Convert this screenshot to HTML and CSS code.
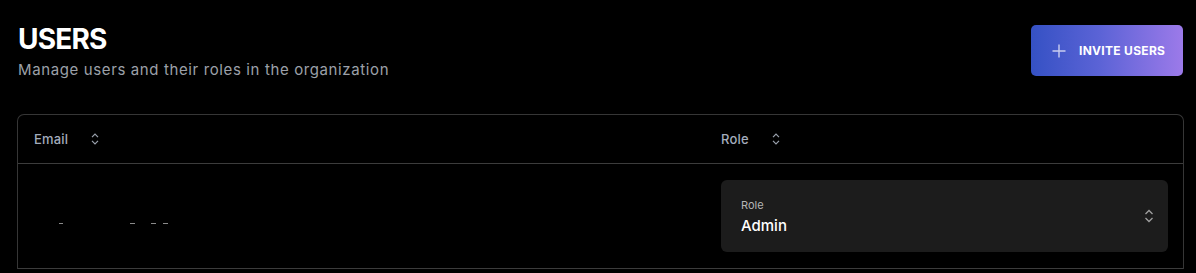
FILE: index.html
```html
<!DOCTYPE html>
<html lang="en">
<head>
<meta charset="utf-8">
<title>Users</title>
<link rel="stylesheet" href="styles.css">
</head>
<body>
<div class="page">
  <header class="top">
    <div class="titles">
      <h1 class="title">USERS</h1>
      <p class="subtitle">Manage users and their roles in the organization</p>
    </div>
    <button class="invite" type="button">
      <svg class="plus" width="14" height="14" viewBox="0 0 14 14" aria-hidden="true">
        <path d="M7 0.5V13.5M0.5 7H13.5" stroke="currentColor" stroke-width="1.4" fill="none"/>
      </svg>
      <span>INVITE USERS</span>
    </button>
  </header>

  <div class="table">
    <div class="row head">
      <div class="cell th">Email
        <svg class="sort" width="8" height="12" viewBox="0 0 8 12" aria-hidden="true"><path d="M1 4.2L4 1.2L7 4.2M1 7.8L4 10.8L7 7.8" stroke="currentColor" stroke-width="1.2" fill="none"/></svg>
      </div>
      <div class="cell th">Role
        <svg class="sort" width="8" height="12" viewBox="0 0 8 12" aria-hidden="true"><path d="M1 4.2L4 1.2L7 4.2M1 7.8L4 10.8L7 7.8" stroke="currentColor" stroke-width="1.2" fill="none"/></svg>
      </div>
    </div>
    <div class="row body">
      <div class="cell email">
        <span class="redact r1"></span><span class="redact r2"></span><span class="redact r3"></span><span class="redact r4"></span>
      </div>
      <div class="cell role">
        <div class="select">
          <div class="select-text">
            <span class="select-label">Role</span>
            <span class="select-value">Admin</span>
          </div>
          <svg class="chev" width="10" height="14" viewBox="0 0 10 14" aria-hidden="true"><path d="M1.5 5L5 1.5L8.5 5M1.5 9L5 12.5L8.5 9" stroke="currentColor" stroke-width="1.3" fill="none"/></svg>
        </div>
      </div>
    </div>
  </div>
</div>
</body>
</html>
```
FILE: styles.css
```css
* { box-sizing: border-box; }
html, body { margin: 0; padding: 0; background: #000; }
body {
  font-family: "Inter", "Liberation Sans", sans-serif;
  color: #fff;
}
.page {
  padding: 25px 12px 0 17px;
}
.top {
  display: flex;
  justify-content: space-between;
  align-items: flex-start;
  padding-right: 1px;
}
.titles { padding-left: 1px; }
.title {
  margin: 0;
  font-size: 28px;
  line-height: 28px;
  font-weight: 700;
  letter-spacing: -0.8px;
}
.subtitle {
  margin: 8px 0 0 0;
  font-size: 15px;
  line-height: 18px;
  color: #9ca0a9;
  letter-spacing: 0.62px;
}
.invite {
  display: flex;
  align-items: center;
  gap: 13px;
  width: 152px;
  height: 51px;
  padding: 0 0 0 21px;
  border: none;
  border-radius: 5px;
  background: linear-gradient(90deg, #3551c4 0%, #5b63d6 45%, #9c7ae9 100%);
  color: #fff;
  font-family: inherit;
  font-size: 12px;
  font-weight: 700;
  letter-spacing: 0.3px;
  cursor: pointer;
}
.plus { color: #c9cdf0; }
.table {
  margin-top: 35px;
  border: 1px solid #363636;
  border-bottom: none;
  border-radius: 7px 7px 0 0;
}
.row {
  display: grid;
  grid-template-columns: 687px 1fr;
}
.head {
  height: 49px;
  border-bottom: 1px solid #3c3c3c;
}
.body {
  height: 105px;
  border-bottom: 1px solid #3c3c3c;
}
.cell {
  padding: 0 16px;
  display: flex;
  align-items: center;
}
.th {
  font-size: 13px;
  font-weight: 500;
  color: #a3acbc;
  letter-spacing: 0.2px;
  gap: 23px;
}
.sort { color: #9aa1ad; }
.email { position: relative; }
.redact {
  display: block;
  position: absolute;
  top: 59px;
  height: 1px;
  background: #8a8a8a;
}
.r1 { left: 41px; width: 4px; }
.r2 { left: 112px; width: 5px; }
.r3 { left: 133px; width: 5px; }
.r4 { left: 145px; width: 5px; }
.role {
  padding: 16px 15px 16px 16px;
  align-items: stretch;
}
.select {
  flex: 1;
  display: flex;
  align-items: center;
  justify-content: space-between;
  background: #1c1c1c;
  border-radius: 6px;
  padding: 0 14px 0 20px;
}
.select-text {
  display: flex;
  flex-direction: column;
  gap: 4px;
}
.select-label {
  font-size: 11px;
  color: #b5b5b5;
}
.select-value {
  font-size: 15px;
  font-weight: 500;
  color: #fff;
}
.chev { color: #a0a0a0; }
```
